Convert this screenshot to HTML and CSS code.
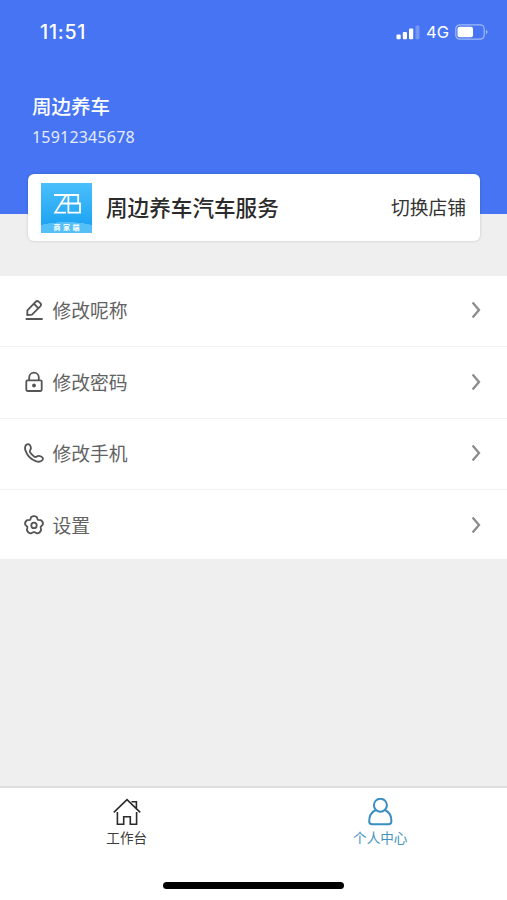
FILE: index.html
```html
<!DOCTYPE html>
<html lang="zh-CN">
<head>
<meta charset="utf-8">
<title>个人中心</title>
<link rel="stylesheet" href="styles.css">
</head>
<body>
<div class="app">
  <header class="header">
    <div class="status">
      <span class="time">11:51</span>
      <div class="indicators">
        <svg class="signal" width="24" height="16" viewBox="0 0 24 16" fill="#fff"><rect x="0.5" y="10.5" width="4.2" height="4.8" rx="1"/><rect x="6.8" y="8" width="4.2" height="7.3" rx="1"/><rect x="13" y="4.5" width="4.2" height="10.8" rx="1"/><rect x="19.5" y="1.5" width="4" height="13.8" rx="1" opacity=".25"/></svg>
        <span class="network">4G</span>
        <svg width="34" height="16" viewBox="0 0 34 16"><rect x=".8" y=".8" width="28.4" height="14.4" rx="4" fill="none" stroke="#fff" stroke-opacity=".5" stroke-width="1.2"/><rect x="2.5" y="2.8" width="15.5" height="10.4" rx="2" fill="#fff"/><path d="M31 5.5q3 2.5 0 5z" fill="#fff" opacity=".5"/></svg>
      </div>
    </div>
    <div class="name">周边养车</div>
    <div class="phone">15912345678</div>
  </header>
  <section class="card">
    <div class="logo">
      <svg class="mark" width="50" height="40" viewBox="0 0 50 40" fill="none" stroke="#fff" stroke-width="1.8"><path d="M12 12H36.2V20M24.3 12L13.2 29.6H24M18.5 20.5H38V29.6H27.2M26.4 12V30.4"/></svg>
      <span class="logo-text">商家端</span>
    </div>
    <div class="shop">周边养车汽车服务</div>
    <div class="switch">切换店铺</div>
  </section>
  <nav class="menu">
    <div class="row">
      <svg class="icon" viewBox="0 0 20 20"><path d="M2.4 19H18M3.2 15L3.4 10.3L11.6 1.8Q13.2.3 14.8 1.8L16.3 3.2Q17.8 4.7 16.3 6.3L8 14.7ZM10.2 4L14 7.9"/></svg>
      <span class="label">修改呢称</span>
      <svg class="arrow" viewBox="0 0 10 18"><path d="M1.6 1.6L8 9L1.6 16.4"/></svg>
    </div>
    <div class="row">
      <svg class="icon" viewBox="0 0 20 20"><rect x="2.3" y="8.4" width="15.4" height="10.6" rx="1.2"/><path d="M5.2 8.2V5.5a4.8 4.8 0 0 1 9.6 0V8.2"/><circle class="dot" cx="10" cy="13.5" r="1.9"/></svg>
      <span class="label">修改密码</span>
      <svg class="arrow" viewBox="0 0 10 18"><path d="M1.6 1.6L8 9L1.6 16.4"/></svg>
    </div>
    <div class="row">
      <svg class="icon" viewBox="0 0 20 20"><path d="M2 2Q4.6 0 6.1 2.4Q7.7 5.3 6.2 7Q5.3 8.2 6.2 9.6Q7.9 12.2 10.4 13.7Q11.7 14.4 12.9 13.5Q14.5 12.3 17.5 13.7Q19.8 15 18.5 17Q16.5 19.6 12.3 18.4Q4.3 15.6 1.4 7.4Q.4 4 2 2Z"/></svg>
      <span class="label">修改手机</span>
      <svg class="arrow" viewBox="0 0 10 18"><path d="M1.6 1.6L8 9L1.6 16.4"/></svg>
    </div>
    <div class="row">
      <svg class="icon" viewBox="0 0 20 20"><path d="M7.2 2.1Q10 .3 12.8 2.1L13.8 4.8L16.7 5.1Q19.6 7.1 18.8 9.6L16.6 11.8L17.1 15.2Q15.7 18.6 13.1 18.4L10 17L6.9 18.4Q4.3 18.6 2.9 15.2L3.4 11.8L1.2 9.6Q.4 7.1 3.3 5.1L6.2 4.8Z"/><circle cx="10" cy="10.4" r="2.7"/></svg>
      <span class="label">设置</span>
      <svg class="arrow" viewBox="0 0 10 18"><path d="M1.6 1.6L8 9L1.6 16.4"/></svg>
    </div>
  </nav>
  <footer class="tabbar">
    <div class="tabs">
      <div class="tab">
        <svg class="tab-icon" viewBox="0 0 28 28"><path d="M.8 14.3L14 1.6L27.2 14.3M4.4 14V26.2H10.7V18.8H17.3V26.2H23.6V14M18.5 3.8H23.4V10.2"/></svg>
        <span>工作台</span>
      </div>
      <div class="tab active">
        <svg class="tab-icon" viewBox="0 0 28 28"><circle cx="14.4" cy="7.2" r="6.5"/><path d="M9.8 12C5.6 13.9 3.2 18.5 3.2 23.2Q3.2 26.2 6.2 26.2H22.4Q25.4 26.2 25.4 23.2C25.4 18.5 23.2 13.9 19 12"/></svg>
        <span>个人中心</span>
      </div>
    </div>
    <div class="home-bar"></div>
  </footer>
</div>
</body>
</html>
```
FILE: styles.css
```css
* { box-sizing: border-box; }
body { margin: 0; font-family: "Noto Sans CJK SC", sans-serif; }
.app { height: 900px; display: flex; flex-direction: column; background: #efefef; overflow: hidden; }
.header { height: 214px; flex: none; background: #4674f2; color: #fff; }
.status { height: 62px; padding: 0 18px 0 40px; display: flex; align-items: center; justify-content: space-between; }
.time { font: 500 19.5px/24px Inter, sans-serif; letter-spacing: .8px; padding-top: 1px; }
.indicators { display: flex; align-items: center; padding-top: 1px; }
.network { font: 400 16.5px/20px Inter, sans-serif; margin: 0 6px 0 6px; }
.name { margin: 30px 0 0 32px; font-size: 19.5px; line-height: 28px; font-weight: 500; }
.phone { margin: 6px 0 0 32px; font: 16px/22px "Noto Sans", sans-serif; color: #e4ebff; letter-spacing: .2px; }
.card { flex: none; height: 67px; margin: -40px 27px 0 28px; padding: 0 14px 0 13px; display: flex; align-items: center; background: #fff; border-radius: 6px; box-shadow: 0 0 3px rgba(0,0,0,.18); }
.logo { width: 51px; height: 50px; display: flex; flex-direction: column; align-items: center; background: radial-gradient(ellipse 42px 14px at 50% 53px, #55c0f7 98%, transparent 100%), linear-gradient(#4abffc, #169ff0); }
.mark { display: block; flex: none; }
.logo-text { font-size: 7px; line-height: 8px; font-weight: 700; color: #fff; letter-spacing: 2.5px; margin-right: -2.5px; }
.shop { margin: -3px 0 0 14px; font-size: 21.6px; font-weight: 500; color: #2b2b2b; }
.switch { margin: -2px 0 0 auto; font-size: 18.8px; color: #333; }
.menu { flex: none; margin-top: 35px; background: #fff; }
.row { height: 71.4px; padding: 0 26px 2px 24px; display: flex; align-items: center; border-bottom: 1.5px solid #f1f1f1; }
.row:last-child { border-bottom: 0; height: 69px; padding-bottom: 0; }
.icon { width: 20px; height: 20px; fill: none; stroke: #555; stroke-width: 1.8; stroke-linejoin: round; stroke-linecap: round; overflow: visible; }
.dot { fill: #555; stroke: none; }
.label { margin: -1px 0 0 8.5px; font-size: 18.8px; color: #626262; }
.arrow { width: 10px; height: 18px; margin-left: auto; fill: none; stroke: #8c8c8c; stroke-width: 2.3; }
.tabbar { margin-top: auto; height: 114px; flex: none; background: #fff; border-top: 2px solid #dedede; display: flex; flex-direction: column; align-items: center; }
.tabs { width: 100%; display: flex; height: 94px; }
.tab { flex: 1; padding-top: 10px; display: flex; flex-direction: column; align-items: center; font-size: 13.6px; line-height: 20px; color: #3d3d3d; }
.tab-icon { width: 28px; height: 28px; margin-bottom: 1px; fill: none; stroke: #2b2b2b; stroke-width: 1.6; }
.active { color: #4793bd; }
.active .tab-icon { stroke: #3a8fc2; stroke-width: 2; }
.home-bar { width: 181px; height: 7px; border-radius: 4px; background: #000; }
```
